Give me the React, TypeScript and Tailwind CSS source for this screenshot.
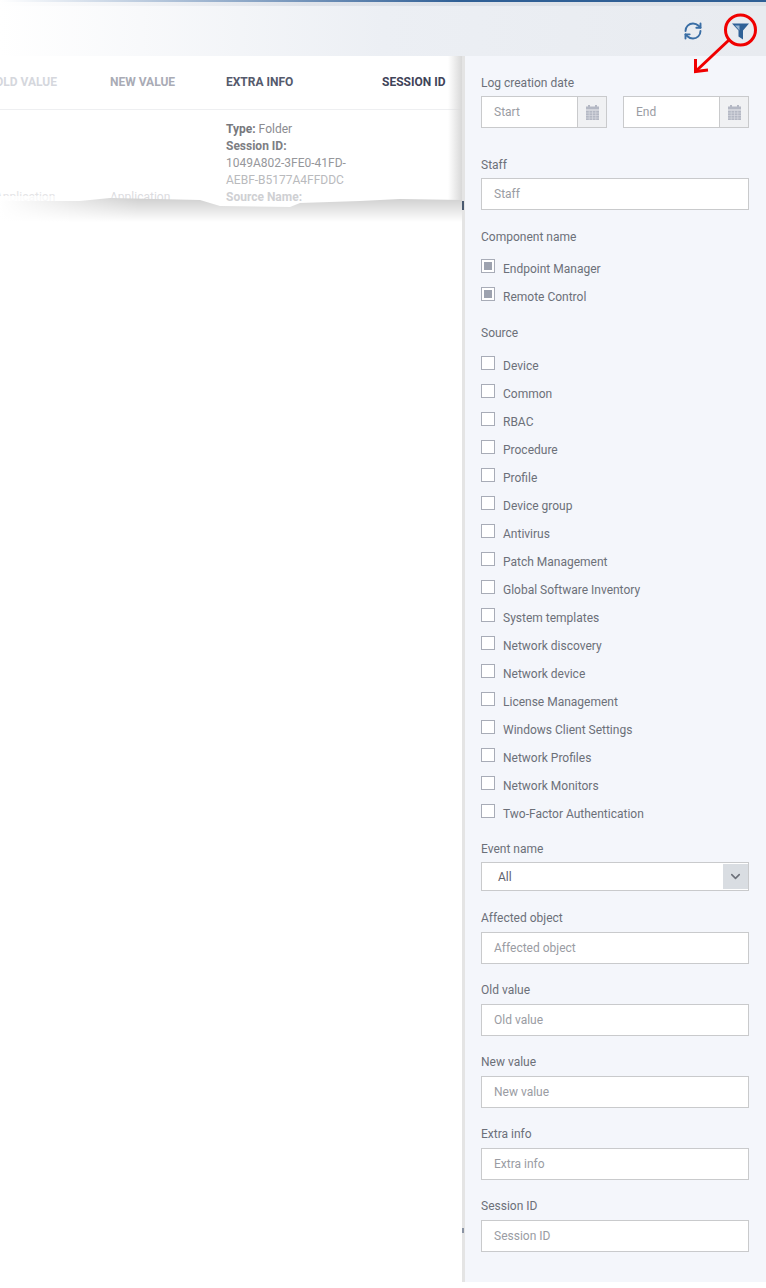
import React from 'react';
import { ChevronDown, RefreshCw } from 'lucide-react';

const componentNames = ['Endpoint Manager', 'Remote Control'];

const sources = [
  'Device',
  'Common',
  'RBAC',
  'Procedure',
  'Profile',
  'Device group',
  'Antivirus',
  'Patch Management',
  'Global Software Inventory',
  'System templates',
  'Network discovery',
  'Network device',
  'License Management',
  'Windows Client Settings',
  'Network Profiles',
  'Network Monitors',
  'Two-Factor Authentication',
];

const CalendarIcon: React.FC = () => (
  <svg width="13" height="15" viewBox="0 0 13 15" className="text-[#b4b8c4]">
    <rect x="2" y="0" width="2" height="3" fill="currentColor" />
    <rect x="9" y="0" width="2" height="3" fill="currentColor" />
    <rect x="0" y="1.500" width="13" height="3" fill="currentColor" />
    <rect x="0" y="5.500" width="13" height="9.500" fill="currentColor" />
    <path d="M0 8h13M0 10.500h13M0 13h13M3.200 5.500v9.500M6.500 5.500v9.500M9.800 5.500v9.500" stroke="#dcdee4" strokeWidth="0.6" />
  </svg>
);

const FunnelIcon: React.FC = () => (
  <svg width="17" height="17" viewBox="0 0 17 17">
    <path d="M0 0.500h17L11 7.500V16.500L6.500 13.500V7.500z" fill="#2f6197" />
    <path d="M3 2.500h4.500L7.500 7.500z" fill="#9db8d4" />
  </svg>
);

const Label: React.FC<{ children: React.ReactNode; className?: string }> = ({ children, className }) => (
  <div className={`h-5 leading-5 text-[12px] text-[#6c7079] ${className ?? ''}`}>{children}</div>
);

const TextField: React.FC<{ placeholder: string; className?: string }> = ({ placeholder, className }) => (
  <div className={`h-8 border border-[#c9cacc] bg-white pl-3 leading-[30px] text-[12px] text-[#9a9ca3] ${className ?? ''}`}>
    {placeholder}
  </div>
);

const DateField: React.FC<{ placeholder: string }> = ({ placeholder }) => (
  <div className="flex w-[126px]">
    <TextField placeholder={placeholder} className="w-[97px]" />
    <div className="flex h-8 w-[29px] items-center justify-center border border-l-0 border-[#c9cacc] bg-[#f0f1f3]">
      <CalendarIcon />
    </div>
  </div>
);

const CheckRow: React.FC<{ label: string; checked?: boolean }> = ({ label, checked }) => (
  <div className="flex h-7 items-center gap-2">
    <span className="mb-1 flex h-[14px] w-[14px] items-center justify-center border border-[#a8acb7] bg-white">
      {checked && <span className="h-2 w-2 bg-[#9da2af]" />}
    </span>
    <span className="pt-[1px] text-[12px] text-[#6c7079]">{label}</span>
  </div>
);

const App: React.FC = () => {
  return (
    <div className="relative h-[1282px] w-[766px] overflow-hidden bg-white font-['Roboto',_'Liberation_Sans',_sans-serif]">
      {/* 顶部色条和工具栏 */}
      <div className="h-[2px] bg-gradient-to-r from-white via-[#2f5f95] via-60% to-[#2f5f95]" />
      <div className="h-1 bg-gradient-to-r from-white via-[#dfe3ea] via-40% to-[#dde1e7]" />
      <div className="flex h-[50px] items-center justify-end gap-[29px] bg-gradient-to-r from-white via-[#eceff4] via-50% to-[#e8ebf0] pr-[17px]">
        <RefreshCw size={20} strokeWidth={2.3} className="text-[#3a6ea5]" />
        <FunnelIcon />
      </div>

      <div className="flex h-[1226px]">
        {/* 被筛选面板遮住的表格 */}
        <div className="relative w-[462px] overflow-hidden">
          <div className="ml-[-5px] grid h-[54px] grid-cols-[115px_116px_156px_1fr] items-center border-b border-[#eeeff1] pb-[2px] text-[12px] font-bold">
            <div className="whitespace-nowrap text-[#d5d7dd]">OLD VALUE</div>
            <div className="text-[#a9abb5]">NEW VALUE</div>
            <div className="text-[#555a6c]">EXTRA INFO</div>
            <div className="text-[#3f4459]">SESSION ID</div>
          </div>
          <div className="ml-[-5px] grid grid-cols-[115px_116px_156px_1fr] text-[12px] leading-[17px]">
            <div className="pt-[79px] text-[#e4e4e6]">Application</div>
            <div className="pt-[79px] text-[#dcdcdf]">Application</div>
            <div className="w-[130px] pt-[11px] text-[#8b8c90]">
              <div>
                <b className="text-[#77787d]">Type:</b> Folder
              </div>
              <div>
                <b className="text-[#7d7e83]">Session ID:</b>
              </div>
              <div className="text-[#96979b]">1049A802-3FE0-41FD-</div>
              <div className="text-[#b9babd]">AEBF-B5177A4FFDDC</div>
              <div className="font-bold text-[#cfd0d3]">Source Name:</div>
            </div>
          </div>
          {/* 面板投到表格上的阴影 */}
          <div className="absolute right-0 top-0 h-[146px] w-[14px] bg-gradient-to-r from-transparent to-[#d8d8d8]" />
          {/* 撕纸边缘 */}
          <svg className="absolute left-0 top-[140px]" width="462" height="26" viewBox="0 0 462 26">
            <defs>
              <linearGradient id="tear" x1="0" y1="0" x2="0" y2="1">
                <stop offset="0" stopColor="#cfcfcf" />
                <stop offset="1" stopColor="#ffffff" />
              </linearGradient>
              <linearGradient id="tearFade" x1="0" y1="0" x2="1" y2="0">
                <stop offset="0" stopColor="#ffffff" />
                <stop offset="0.3" stopColor="#ffffff" stopOpacity="0" />
              </linearGradient>
            </defs>
            <path
              d="M0 5H80L110 2L200 4L220 10L290 11L300 7L360 5L400 3L462 4V26H0Z"
              fill="url(#tear)"
            />
            <rect width="462" height="26" fill="url(#tearFade)" />
          </svg>
        </div>

        {/* 筛选面板 */}
        <aside className="w-[304px] border-l-[3px] border-[#e4e4e4] bg-[#f4f6fb] pl-4 pr-[17px] pt-[17px]">
          <Label className="mb-[3px]">Log creation date</Label>
          <div className="flex gap-4">
            <DateField placeholder="Start" />
            <DateField placeholder="End" />
          </div>

          <Label className="mb-[3px] mt-[27px]">Staff</Label>
          <TextField placeholder="Staff" />

          <Label className="mb-[7px] mt-[17px]">Component name</Label>
          {componentNames.map((name) => (
            <CheckRow key={name} label={name} checked />
          ))}

          <Label className="mb-2 mt-[13px]">Source</Label>
          {sources.map((name) => (
            <CheckRow key={name} label={name} />
          ))}

          <Label className="mb-[3px] mt-3">Event name</Label>
          <div className="flex h-[29px] items-center justify-between border border-[#c9cacc] bg-white pl-4 text-[12px] text-[#5f636c]">
            <span className="pt-[1px]">All</span>
            <span className="flex h-[25px] w-[25px] items-center justify-center bg-[#d9dde2]">
              <ChevronDown size={15} strokeWidth={2.5} className="text-[#6c7079]" />
            </span>
          </div>

          <Label className="mb-1 mt-[17px]">Affected object</Label>
          <TextField placeholder="Affected object" />
          <Label className="mb-1 mt-4">Old value</Label>
          <TextField placeholder="Old value" />
          <Label className="mb-1 mt-4">New value</Label>
          <TextField placeholder="New value" />
          <Label className="mb-1 mt-4">Extra info</Label>
          <TextField placeholder="Extra info" />
          <Label className="mb-1 mt-4">Session ID</Label>
          <TextField placeholder="Session ID" />
        </aside>
      </div>

      {/* 面板边上露出的表格残迹 */}
      <span className="absolute left-[462px] top-[201px] h-[9px] w-[2px] bg-[#4a5a70]" />
      <span className="absolute left-[462px] top-[1228px] h-[5px] w-[2px] bg-[#8a93a3]" />

      {/* 红色标注 */}
      <svg className="absolute left-[690px] top-[10px]" width="76" height="66" viewBox="0 0 76 66" fill="none" stroke="#f00000">
        <circle cx="50.500" cy="20" r="15" strokeWidth="3" />
        <path d="M39 30L6 61" strokeWidth="3" />
        <path d="M5.500 49L5.500 61.500L18 60" strokeWidth="3" />
      </svg>
    </div>
  );
};

export default App;
